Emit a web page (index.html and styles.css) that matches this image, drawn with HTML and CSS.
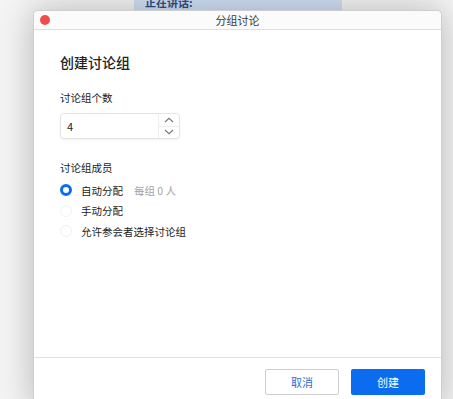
FILE: index.html
```html
<!DOCTYPE html>
<html lang="zh-CN">
<head>
    <meta charset="UTF-8">
    <meta name="viewport" content="width=device-width, initial-scale=1.0">
    <title>分组讨论</title>
    <link rel="stylesheet" href="styles.css">
</head>
<body>
    <div class="desktop">
        <div class="speaker-tag">正在讲话:</div>

        <div class="window">
            <div class="titlebar">
                <span class="close-dot"></span>
                <span class="title">分组讨论</span>
            </div>

            <div class="window-body">
                <h1 class="heading">创建讨论组</h1>

                <div class="field-label">讨论组个数</div>
                <div class="number-input">
                    <span class="number-value">4</span>
                    <div class="spinner">
                        <div class="spin-btn">
                            <svg width="10" height="6" viewBox="0 0 10 6"><polyline points="1,5 5,1.3 9,5" fill="none" stroke="#777" stroke-width="1.1"/></svg>
                        </div>
                        <div class="spin-btn spin-down">
                            <svg width="10" height="6" viewBox="0 0 10 6"><polyline points="1,1 5,4.7 9,1" fill="none" stroke="#777" stroke-width="1.1"/></svg>
                        </div>
                    </div>
                </div>

                <div class="field-label members-label">讨论组成员</div>
                <div class="radio-list">
                    <div class="radio-row">
                        <span class="radio checked"></span>
                        <span class="radio-text">自动分配</span>
                        <span class="radio-hint">每组 0 人</span>
                    </div>
                    <div class="radio-row">
                        <span class="radio"></span>
                        <span class="radio-text">手动分配</span>
                    </div>
                    <div class="radio-row">
                        <span class="radio"></span>
                        <span class="radio-text">允许参会者选择讨论组</span>
                    </div>
                </div>
            </div>

            <div class="window-footer">
                <button class="btn btn-cancel">取消</button>
                <button class="btn btn-primary">创建</button>
            </div>
        </div>
    </div>
</body>
</html>
```

FILE: styles.css
```css
body, html {
    margin: 0;
    padding: 0;
    height: 100%;
    overflow: hidden;
    font-family: "Noto Sans CJK SC", "Noto Sans", sans-serif;
}
.desktop {
    position: relative;
    width: 100%;
    height: 100%;
    background-color: #f4f4f4;
}
.speaker-tag {
    position: absolute;
    left: 134px;
    top: -5px;
    width: 197px;
    height: 15px;
    padding-left: 11px;
    background-color: #cfe0f4;
    color: #2d4f86;
    font-size: 11px;
    line-height: 14px;
    font-weight: 600;
}
.window {
    position: absolute;
    left: 33px;
    top: 10px;
    width: 409px;
    height: 398px;
    box-sizing: border-box;
    background-color: #fff;
    border: 1px solid #cfcfcf;
    border-bottom: none;
    border-radius: 5px 5px 0 0;
    box-shadow: 0 0 34px rgba(0, 0, 0, 0.26);
    display: flex;
    flex-direction: column;
}
.titlebar {
    position: relative;
    height: 18px;
    border-bottom: 1px solid #dedede;
    background-color: #fbfbfb;
    border-radius: 5px 5px 0 0;
    display: flex;
    align-items: center;
    justify-content: center;
}
.close-dot {
    position: absolute;
    left: 6px;
    top: 4px;
    width: 10px;
    height: 10px;
    border-radius: 50%;
    background-color: #ef4d4d;
}
.title {
    font-size: 11px;
    color: #3a3a3a;
}
.window-body {
    height: 327px;
    padding: 22px 26px 0;
    box-sizing: border-box;
}
.heading {
    margin: 0;
    font-size: 14px;
    line-height: 20px;
    font-weight: 500;
    color: #222;
}
.field-label {
    margin-top: 18px;
    font-size: 10.5px;
    line-height: 16px;
    color: #222;
}
.members-label {
    margin-top: 21px;
}
.number-input {
    margin-top: 7px;
    width: 120px;
    height: 26px;
    box-sizing: border-box;
    border: 1px solid #e4e4e4;
    border-radius: 4px;
    box-shadow: 0 1px 2px rgba(0, 0, 0, 0.06);
    display: flex;
    align-items: stretch;
}
.number-value {
    flex: 1;
    padding-left: 6px;
    font-size: 11px;
    line-height: 24px;
    color: #222;
}
.spinner {
    width: 20px;
    border-left: 1px solid #eeeeee;
    display: flex;
    flex-direction: column;
}
.spin-btn {
    flex: 1;
    display: flex;
    align-items: center;
    justify-content: center;
}
.spin-down {
    border-top: 1px solid #eeeeee;
}
.radio-list {
    margin-top: 4px;
}
.radio-row {
    height: 20.5px;
    display: flex;
    align-items: center;
    font-size: 10.5px;
    color: #222;
}
.radio {
    width: 12px;
    height: 12px;
    box-sizing: border-box;
    border: 1px solid #f1f1f1;
    border-radius: 50%;
    background-color: #fff;
    margin-right: 9px;
}
.radio.checked {
    border: 3.5px solid #0b6cf0;
}
.radio-hint {
    margin-left: 11px;
    color: #a3a3a3;
}
.window-footer {
    border-top: 1px solid #e2e2e2;
    padding: 11px 16px 0 0;
    display: flex;
    justify-content: flex-end;
    gap: 12px;
}
.btn {
    width: 74px;
    height: 26px;
    box-sizing: border-box;
    border-radius: 2px;
    font-family: inherit;
    font-size: 11px;
    cursor: pointer;
}
.btn-cancel {
    background-color: #fff;
    border: 1px solid #cfcfcf;
    color: #2a6fd6;
}
.btn-primary {
    background-color: #0b6cf0;
    border: none;
    color: #fff;
}
```
